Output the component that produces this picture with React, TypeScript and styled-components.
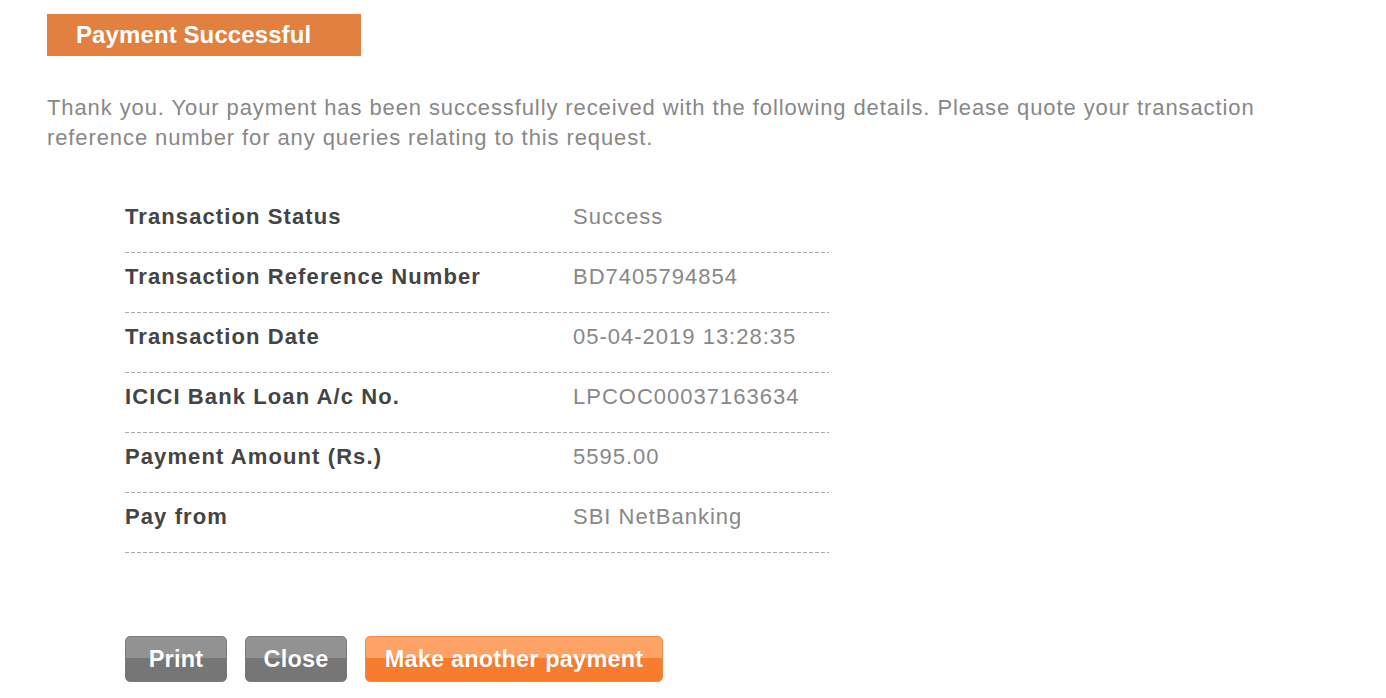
import React from "react";
import styled, { createGlobalStyle } from "styled-components";

const GlobalStyle = createGlobalStyle`
  html, body { margin: 0; padding: 0; background: #ffffff; }
  body { font-family: "Liberation Sans", Arial, Helvetica, sans-serif; }
`;

const Page = styled.div`
  padding: 14px 0 0 47px;
  display: flex;
  flex-direction: column;
  align-items: flex-start;
`;

const Banner = styled.div`
  width: 314px;
  height: 42px;
  box-sizing: border-box;
  padding-left: 29px;
  display: flex;
  align-items: center;
  background: #e2803f;
  color: #ffffff;
  font-size: 24px;
  font-weight: bold;
  letter-spacing: 0.1px;
`;

const Intro = styled.p`
  margin: 37px 0 0 0;
  width: 1230px;
  color: #888888;
  font-size: 22px;
  letter-spacing: 0.9px;
  line-height: 30px;
`;

const Table = styled.div`
  margin: 40px 0 0 78px;
  width: 704px;
  display: flex;
  flex-direction: column;
`;

const Row = styled.div`
  display: grid;
  grid-template-columns: 448px 1fr;
  padding: 12px 0 24px 0;
  line-height: 24px;
  font-size: 22px;
  background-image: repeating-linear-gradient(
    to right,
    #aaaaaa 0,
    #aaaaaa 4px,
    transparent 4px,
    transparent 6px
  );
  background-size: 100% 1px;
  background-repeat: no-repeat;
  background-position: left bottom;
`;

const Label = styled.div`
  color: #444444;
  font-weight: bold;
  letter-spacing: 1.1px;
`;

const Value = styled.div`
  color: #888888;
  letter-spacing: 1px;
`;

const Buttons = styled.div`
  margin: 83px 0 0 78px;
  display: flex;
  gap: 18px;
`;

const Button = styled.button<{ $primary?: boolean }>`
  height: 46px;
  width: ${(p) => (p.$primary ? "298px" : "102px")};
  border-radius: 5px;
  border: 1px solid ${(p) => (p.$primary ? "#f08a45" : "#7a7a7a")};
  background: ${(p) =>
    p.$primary
      ? "linear-gradient(to bottom, #ffa265 0%, #ffa265 48%, #f77c2e 48%, #f77c2e 100%)"
      : "linear-gradient(to bottom, #929292 0%, #929292 48%, #767676 48%, #767676 100%)"};
  color: #ffffff;
  font-family: "Liberation Sans", Arial, sans-serif;
  font-weight: bold;
  font-size: 23.5px;
  letter-spacing: 0.2px;
  padding: 0;
  cursor: pointer;
  text-shadow: 0 0 1px rgba(0, 0, 0, 0.15);
`;

const rows: [string, string][] = [
  ["Transaction Status", "Success"],
  ["Transaction Reference Number", "BD7405794854"],
  ["Transaction Date", "05-04-2019 13:28:35"],
  ["ICICI Bank Loan A/c No.", "LPCOC00037163634"],
  ["Payment Amount (Rs.)", "5595.00"],
  ["Pay from", "SBI NetBanking"],
];

export default function App() {
  return (
    <>
      <GlobalStyle />
      <Page>
        <Banner>Payment Successful</Banner>
        <Intro>
          Thank you. Your payment has been successfully received with the following details. Please quote your
          transaction reference number for any queries relating to this request.
        </Intro>
        <Table>
          {rows.map(([l, v]) => (
            <Row key={l}>
              <Label>{l}</Label>
              <Value>{v}</Value>
            </Row>
          ))}
        </Table>
        <Buttons>
          <Button>Print</Button>
          <Button>Close</Button>
          <Button $primary>Make another payment</Button>
        </Buttons>
      </Page>
    </>
  );
}
